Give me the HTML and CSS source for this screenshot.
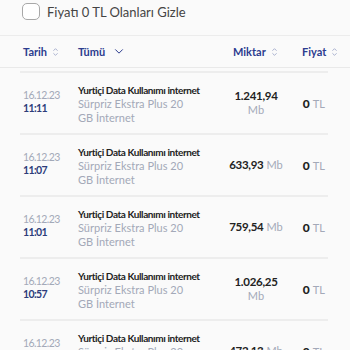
FILE: index.html
```html
<!DOCTYPE html>
<html lang="tr">
<head>
<meta charset="utf-8">
<link rel="stylesheet" href="styles.css">
</head>
<body>
<div class="filter">
  <span class="box"></span>
  <span class="filter-label">Fiyatı 0 TL Olanları Gizle</span>
</div>
<div class="thead">
  <div class="th th-date">Tarih <svg class="sort" viewBox="0 0 8 12"><path d="M1.5 4.5 L4 2 L6.5 4.5 M1.5 7.5 L4 10 L6.5 7.5"/></svg></div>
  <div class="th th-desc">Tümü <svg class="chev" viewBox="0 0 12 8"><path d="M1.5 1.5 L6 6 L10.5 1.5"/></svg></div>
  <div class="th th-amt">Miktar <svg class="sort" viewBox="0 0 8 12"><path d="M1.5 4.5 L4 2 L6.5 4.5 M1.5 7.5 L4 10 L6.5 7.5"/></svg></div>
  <div class="th th-price">Fiyat <svg class="sort" viewBox="0 0 8 12"><path d="M1.5 4.5 L4 2 L6.5 4.5 M1.5 7.5 L4 10 L6.5 7.5"/></svg></div>
</div>
<div class="rows">
  <div class="row">
    <div class="date"><span class="d">16.12.23</span><span class="t">11:11</span></div>
    <div class="desc"><span class="title">Yurtiçi Data Kullanımı internet</span><span class="sub">Sürpriz Ekstra Plus 20 GB İnternet</span></div>
    <div class="amt"><b>1.241,94</b> <span class="unit">Mb</span></div>
    <div class="price"><b>0</b> <span class="unit">TL</span></div>
  </div>
  <div class="row">
    <div class="date"><span class="d">16.12.23</span><span class="t">11:07</span></div>
    <div class="desc"><span class="title">Yurtiçi Data Kullanımı internet</span><span class="sub">Sürpriz Ekstra Plus 20 GB İnternet</span></div>
    <div class="amt"><b>633,93</b> <span class="unit">Mb</span></div>
    <div class="price"><b>0</b> <span class="unit">TL</span></div>
  </div>
  <div class="row">
    <div class="date"><span class="d">16.12.23</span><span class="t">11:01</span></div>
    <div class="desc"><span class="title">Yurtiçi Data Kullanımı internet</span><span class="sub">Sürpriz Ekstra Plus 20 GB İnternet</span></div>
    <div class="amt"><b>759,54</b> <span class="unit">Mb</span></div>
    <div class="price"><b>0</b> <span class="unit">TL</span></div>
  </div>
  <div class="row">
    <div class="date"><span class="d">16.12.23</span><span class="t">10:57</span></div>
    <div class="desc"><span class="title">Yurtiçi Data Kullanımı internet</span><span class="sub">Sürpriz Ekstra Plus 20 GB İnternet</span></div>
    <div class="amt"><b>1.026,25</b> <span class="unit">Mb</span></div>
    <div class="price"><b>0</b> <span class="unit">TL</span></div>
  </div>
  <div class="row">
    <div class="date"><span class="d">16.12.23</span><span class="t">10:52</span></div>
    <div class="desc"><span class="title">Yurtiçi Data Kullanımı internet</span><span class="sub">Sürpriz Ekstra Plus 20 GB İnternet</span></div>
    <div class="amt"><b>472,13</b> <span class="unit">Mb</span></div>
    <div class="price"><b>0</b> <span class="unit">TL</span></div>
  </div>
</div>
</body>
</html>
```

FILE: styles.css
```css
html, body {
  margin: 0;
  padding: 0;
  background: #fafafa;
  font-family: "Lato", "Noto Sans", sans-serif;
  color: #222;
  overflow: hidden;
}
.filter {
  height: 36px;
  border-bottom: 1px solid #ececec;
  display: flex;
  align-items: flex-start;
  padding: 3px 0 0 22px;
  box-sizing: border-box;
  gap: 7px;
}
.box {
  width: 16px;
  height: 15px;
  border: 1.5px solid #a8a8a8;
  border-radius: 5px;
  background: #fff;
}
.filter-label {
  font-size: 13px;
  line-height: 18px;
  color: #444;
}
.thead {
  height: 32px;
  display: flex;
  align-items: center;
  border-bottom: 1px solid #e9e9e9;
  font-size: 11px;
  font-weight: 700;
  color: #2c3c8f;
  box-sizing: border-box;
}
.th { display: flex; align-items: center; gap: 5px; }
.th-date { width: 55px; padding-left: 23px; }
.th-desc { width: 155px; gap: 9px; }
.th-amt { width: 69px; }
.sort {
  width: 7px; height: 10px;
  fill: none; stroke: #9aa3c7; stroke-width: 1;
}
.chev {
  width: 10px; height: 7px;
  fill: none; stroke: #2c3c8f; stroke-width: 1.2;
}
.rows {
  margin: 3px 22px 0 20px;
}
.row {
  height: 62px;
  border-top: 2px solid #ededed;
  display: grid;
  grid-template-columns: 58px 147px 62px 1fr;
  align-items: center;
  box-sizing: border-box;
}
.date {
  display: flex;
  flex-direction: column;
  padding-left: 3px;
  font-size: 10.5px;
  line-height: 13px;
  letter-spacing: -0.6px;
  margin-top: -2px;
}
.date .d { color: #a3a9b8; }
.date .t { color: #2c3c7a; font-weight: 700; }
.desc {
  display: flex;
  flex-direction: column;
  font-size: 11px;
  line-height: 14px;
  margin-top: 2px;
}
.desc .title { font-size: 10px; font-weight: 700; color: #222; white-space: nowrap; letter-spacing: -0.4px; }
.desc .sub { color: #a3a9b8; width: 108px; }
.amt {
  text-align: center;
  font-size: 11.5px;
  line-height: 14px;
}
.amt b { font-weight: 700; color: #222; letter-spacing: -0.3px; }
.unit { color: #a3a9b8; font-size: 11px; font-weight: 400; }
.price {
  text-align: right;
  padding-right: 3px;
  font-size: 12px;
}
.price b { font-weight: 900; }
```
